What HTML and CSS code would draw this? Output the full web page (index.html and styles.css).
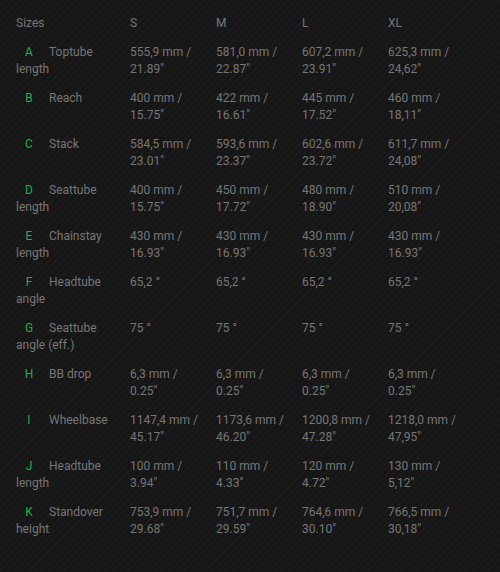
FILE: index.html
```html
<!DOCTYPE html>
<html>
<head>
<meta charset="utf-8">
<link rel="stylesheet" href="styles.css">
</head>
<body>
<table class="geo">
<colgroup><col class="c-name"><col class="c-val"><col class="c-val"><col class="c-val"><col class="c-val"></colgroup>
<thead>
<tr><th class="name">Sizes</th><th>S</th><th>M</th><th>L</th><th>XL</th></tr>
</thead>
<tbody>
<tr><td class="name"><span class="key">A</span>Toptube length</td><td>555,9 mm / 21.89″</td><td>581,0 mm / 22.87″</td><td>607,2 mm / 23.91″</td><td>625,3 mm / 24,62″</td></tr>
<tr><td class="name"><span class="key">B</span>Reach</td><td>400 mm / 15.75″</td><td>422 mm / 16.61″</td><td>445 mm / 17.52″</td><td>460 mm / 18,11″</td></tr>
<tr><td class="name"><span class="key">C</span>Stack</td><td>584,5 mm / 23.01″</td><td>593,6 mm / 23.37″</td><td>602,6 mm / 23.72″</td><td>611,7 mm / 24,08″</td></tr>
<tr><td class="name"><span class="key">D</span>Seattube length</td><td>400 mm / 15.75″</td><td>450 mm / 17.72″</td><td>480 mm / 18.90″</td><td>510 mm / 20,08″</td></tr>
<tr><td class="name"><span class="key">E</span>Chainstay length</td><td>430 mm / 16.93″</td><td>430 mm / 16.93″</td><td>430 mm / 16.93″</td><td>430 mm / 16.93″</td></tr>
<tr><td class="name"><span class="key">F</span>Headtube angle</td><td>65,2 °</td><td>65,2 °</td><td>65,2 °</td><td>65,2 °</td></tr>
<tr><td class="name"><span class="key">G</span>Seattube angle (eff.)</td><td>75 °</td><td>75 °</td><td>75 °</td><td>75 °</td></tr>
<tr><td class="name"><span class="key">H</span>BB drop</td><td>6,3 mm / 0.25″</td><td>6,3 mm / 0.25″</td><td>6,3 mm / 0.25″</td><td>6,3 mm / 0.25″</td></tr>
<tr><td class="name"><span class="key">I</span>Wheelbase</td><td>1147,4 mm / 45.17″</td><td>1173,6 mm / 46.20″</td><td>1200,8 mm / 47.28″</td><td>1218,0 mm / 47,95″</td></tr>
<tr><td class="name"><span class="key">J</span>Headtube length</td><td>100 mm / 3.94″</td><td>110 mm / 4.33″</td><td>120 mm / 4.72″</td><td>130 mm / 5,12″</td></tr>
<tr><td class="name"><span class="key">K</span>Standover height</td><td>753,9 mm / 29.68″</td><td>751,7 mm / 29.59″</td><td>764,6 mm / 30.10″</td><td>766,5 mm / 30,18″</td></tr>
</tbody>
</table>
</body>
</html>
```
FILE: styles.css
```css
html, body {
  height: 100%;
}
body {
  margin: 0;
  padding: 9px 0 9px 8px;
  box-sizing: border-box;
  background-color: #161616;
  background-image: repeating-linear-gradient(135deg, #161616 0px, #161616 3px, #1a1a1a 3px, #1a1a1a 5px);
  font-family: Roboto, "Liberation Sans", sans-serif;
  font-size: 12px;
  line-height: 17px;
  color: #767676;
}
.geo {
  border-collapse: collapse;
  table-layout: fixed;
  width: 466px;
}
.c-name {
  width: 122px;
}
.c-val {
  width: 86px;
}
.geo th, .geo td {
  box-sizing: border-box;
  padding: 6px 10px 6px 0;
  text-align: left;
  vertical-align: top;
  font-weight: normal;
}
.geo th.name, .geo td.name {
  padding-left: 8px;
  padding-right: 8px;
}
.key {
  display: inline-block;
  width: 26px;
  margin-right: 7px;
  text-align: center;
  color: #18b24d;
}
```
